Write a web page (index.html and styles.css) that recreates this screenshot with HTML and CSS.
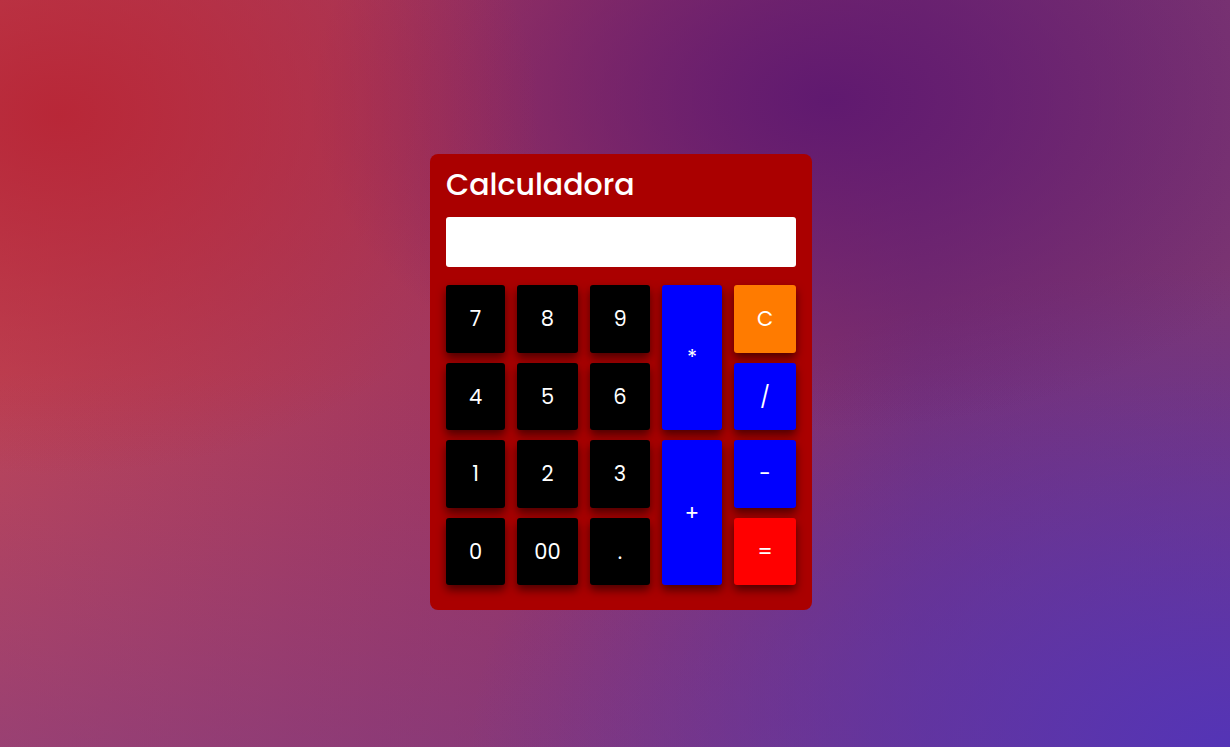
FILE: index.html
```html
<!DOCTYPE html>
<html lang="pt">
<head>
<meta charset="utf-8">
<title>Calculadora</title>
<link rel="stylesheet" href="styles.css">
</head>
<body>
  <main class="calc">
    <h1 class="calc-title">Calculadora</h1>
    <input class="calc-display" type="text" readonly>
    <div class="keys">
      <button class="key num">7</button>
      <button class="key num">8</button>
      <button class="key num">9</button>
      <button class="key op tall">*</button>
      <button class="key clear">C</button>
      <button class="key num">4</button>
      <button class="key num">5</button>
      <button class="key num">6</button>
      <button class="key op">/</button>
      <button class="key num">1</button>
      <button class="key num">2</button>
      <button class="key num">3</button>
      <button class="key op tall">+</button>
      <button class="key op">-</button>
      <button class="key num">0</button>
      <button class="key num">00</button>
      <button class="key num">.</button>
      <button class="key equal">=</button>
    </div>
  </main>
</body>
</html>
```

FILE: styles.css
```css
* { box-sizing: border-box; }

html, body { height: 100%; }

body {
  margin: 0;
  min-height: 100vh;
  padding: 17px 0 0 12px;
  display: flex;
  justify-content: center;
  align-items: center;
  font-family: "Poppins", "Lato", "Open Sans", sans-serif;
  background-color: #8a3e80;
  background-image:
    radial-gradient(ellipse 480px 360px at 60px 115px, rgba(184, 36, 52, 0.9) 0%, rgba(184, 36, 52, 0) 100%),
    radial-gradient(ellipse 520px 330px at 830px 100px, rgba(94, 24, 112, 0.95) 0%, rgba(94, 24, 112, 0) 100%),
    radial-gradient(ellipse 760px 480px at 1230px 747px, rgba(84, 52, 182, 1) 0%, rgba(84, 52, 182, 0) 100%),
    linear-gradient(180deg, rgba(0, 0, 0, 0) 50%, rgba(110, 60, 150, 0.45) 100%),
    linear-gradient(90deg, #bd4456 0%, #9c3460 45%, #7a3070 75%, #7c3672 100%);
}

.calc {
  width: 382px;
  padding: 10px 16px 25px;
  background: #aa0000;
  border-radius: 8px;
}

.calc-title {
  margin: 0 0 11px;
  font-size: 30px;
  line-height: 42px;
  font-weight: 500;
  color: #fff;
}

.calc-display {
  display: block;
  width: 100%;
  height: 50px;
  margin: 0 0 18px;
  border: none;
  border-radius: 3px;
  background: #fff;
  outline: none;
}

.keys {
  display: grid;
  grid-template-columns: 59px 61px 60px 60px 62px;
  grid-template-rows: repeat(4, 67.5px);
  column-gap: 12px;
  row-gap: 10px;
}

.key {
  border: none;
  border-radius: 3px;
  color: #fff;
  font-family: inherit;
  font-size: 21px;
  font-weight: 400;
  padding: 0;
  box-shadow: 0 5px 10px rgba(0, 0, 0, 0.55);
  cursor: pointer;
}

.num { background: #000; }
.op { background: #0000ff; }
.tall { grid-row: span 2; }
.clear { background: #ff7b00; }
.equal { background: #ff0000; }
```
